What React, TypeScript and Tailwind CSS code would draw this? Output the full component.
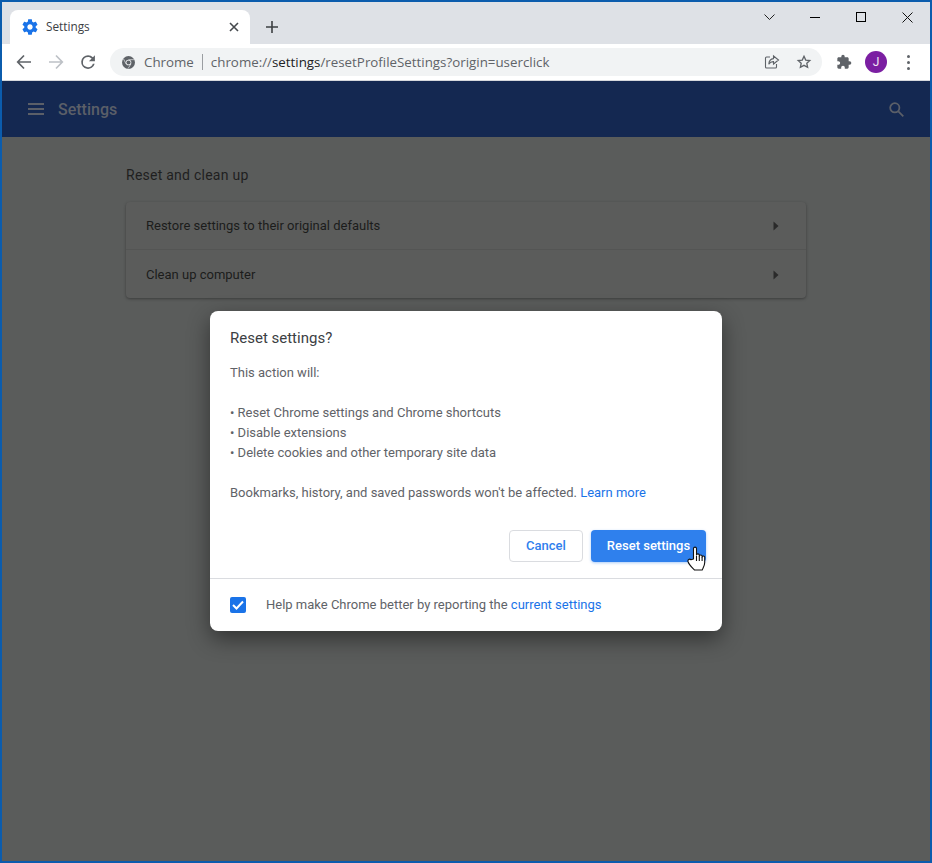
const GEAR = "M19.43 12.98c.04-.32.07-.64.07-.98s-.03-.66-.07-.98l2.11-1.65c.19-.15.24-.42.12-.64l-2-3.46c-.12-.22-.39-.3-.61-.22l-2.49 1c-.52-.4-1.08-.73-1.69-.98l-.38-2.65C14.46 2.18 14.25 2 14 2h-4c-.25 0-.46.18-.49.42l-.38 2.65c-.61.25-1.17.59-1.69.98l-2.49-1c-.23-.09-.49 0-.61.22l-2 3.46c-.13.22-.07.49.12.64l2.11 1.65c-.04.32-.07.65-.07.98s.03.66.07.98l-2.11 1.65c-.19.15-.24.42-.12.64l2 3.46c.12.22.39.3.61.22l2.49-1c.52.4 1.08.73 1.69.98l.38 2.65c.03.24.24.42.49.42h4c.25 0 .46-.18.49-.42l.38-2.65c.61-.25 1.17-.59 1.69-.98l2.49 1c.23.09.49 0 .61-.22l2-3.46c.12-.22.07-.49-.12-.64l-2.11-1.65zM12 15.5c-1.93 0-3.5-1.57-3.5-3.5s1.57-3.5 3.5-3.5 3.5 1.57 3.5 3.5-1.57 3.5-3.5 3.5z";

function Arrow({ color, flip }: { color: string; flip?: boolean }) {
  return (
    <svg width="16" height="16" viewBox="0 0 16 16" fill="none" stroke={color} strokeWidth="1.7" style={flip ? { transform: "scaleX(-1)" } : undefined}>
      <path d="M15 8H2M8 1.5 1.7 8 8 14.5" />
    </svg>
  );
}

function Row({ label, last }: { label: string; last?: boolean }) {
  return (
    <div className={`flex h-[48px] items-center justify-between pl-5 pr-[27px] ${last ? "pt-[1px]" : "border-b border-[#545554]"}`}>
      <span className="text-[13px] text-[#1c1c1c]">{label}</span>
      <svg width="6" height="10" viewBox="0 0 6 10" fill="#2a2a2a"><path d="M0.5 0.5 5.5 5 0.5 9.5z" /></svg>
    </div>
  );
}

export default function App() {
  return (
    <div className="relative flex h-[863px] w-[932px] flex-col overflow-hidden border-2 border-[#0b5cad] bg-[#5a5c5b] font-['Roboto',sans-serif]">
      {/* Tab strip */}
      <div className="flex h-[42px] shrink-0 items-end bg-[#dee1e6] pl-2">
        <div className="flex h-[34px] w-[240px] items-center rounded-t-[8px] bg-white pl-[12px] pr-[11px]">
          <svg width="16" height="16" viewBox="0 0 24 24" fill="#1a73e8" className="scale-[1.15]"><path d={GEAR} /></svg>
          <span className="ml-[8px] flex-1 font-['Open_Sans',sans-serif] text-[11.8px] text-[#3c4043]">Settings</span>
          <svg width="10" height="10" viewBox="0 0 10 10" stroke="#45494d" strokeWidth="1.6" fill="none"><path d="M1 1l8 8M9 1l-8 8" /></svg>
        </div>
        <div className="flex h-[34px] w-[44px] items-center justify-center">
          <svg width="12" height="12" viewBox="0 0 12 12" stroke="#3c4043" strokeWidth="1.6" fill="none"><path d="M6 0v12M0 6h12" /></svg>
        </div>
        <div className="ml-auto flex h-full w-[184px] items-start">
          <div className="flex h-[30px] w-[46px] items-center justify-center">
            <svg width="11" height="7" viewBox="0 0 11 7" stroke="#222" strokeWidth="1" fill="none"><path d="M.5.5l5 5 5-5" /></svg>
          </div>
          <div className="flex h-[30px] w-[46px] items-center justify-center">
            <div className="h-px w-[10px] bg-black" />
          </div>
          <div className="flex h-[30px] w-[46px] items-center justify-center">
            <div className="h-[10px] w-[10px] border border-black" />
          </div>
          <div className="flex h-[30px] w-[46px] items-center justify-center">
            <svg width="11" height="11" viewBox="0 0 11 11" stroke="#111" strokeWidth="1" fill="none"><path d="M.5.5l10 10M10.5.5l-10 10" /></svg>
          </div>
        </div>
      </div>

      {/* Toolbar */}
      <div className="flex h-[37px] shrink-0 items-center border-b border-[#d6d8dc] bg-white">
        <div className="flex w-[108px] items-center pl-[14px]">
          <Arrow color="#5f6368" />
          <div className="ml-[16px]"><Arrow color="#bdc1c6" flip /></div>
          <svg className="ml-[15px]" width="18" height="18" viewBox="0 0 24 24" fill="#5f6368"><path d="M17.65 6.35A7.96 7.96 0 0 0 12 4a8 8 0 1 0 7.73 10h-2.08A6 6 0 1 1 12 6c1.66 0 3.14.69 4.22 1.78L13 11h7V4l-2.35 2.35z" transform="translate(-1.6 -1.6) scale(1.14)" /></svg>
        </div>
        <div className="flex h-[28px] w-[712px] items-center rounded-full bg-[#f1f3f4] pl-[12px] pr-[9px] font-['Open_Sans',sans-serif] text-[13.33px]">
          <svg width="13" height="13" viewBox="0 0 24 24" className="mr-[9px] shrink-0">
            <circle cx="12" cy="12" r="12" fill="#5f6368" />
            <circle cx="12" cy="12" r="5.2" fill="#f1f3f4" />
            <circle cx="12" cy="12" r="3.8" fill="#5f6368" />
            <path d="M12 6.8h10M7.5 14.6 2.8 5.5M16.5 14.6 11 23.5" stroke="#f1f3f4" strokeWidth="1.2" />
          </svg>
          <span className="pt-[1px] text-[#5f6368]">Chrome</span>
          <span className="mx-[8px] h-[16px] w-px bg-[#9a9da1]" />
          <span className="flex-1 whitespace-nowrap pt-[1px] text-[#5f6368]">chrome://<span className="text-[#202124]">settings</span>/resetProfileSettings?origin=userclick</span>
          <svg width="16" height="16" viewBox="0 0 16 16" fill="none" stroke="#5f6368" strokeWidth="1.1" className="mr-[16px]">
            <path d="M6 3H2.5A1 1 0 0 0 1.500 4v9a1 1 0 0 0 1 1h9a1 1 0 0 0 1-1v-3" />
            <path d="M9.500 2v2.600C6.500 4.800 5 7 4.800 10.300 6 8.300 7.500 7.500 9.500 7.600V10l5-4z" />
          </svg>
          <svg width="16" height="16" viewBox="0 0 24 24" fill="none" stroke="#5f6368" strokeWidth="2" className="mr-[1px]">
            <path d="M12 3.500l2.600 5.600 6.100.7-4.500 4.200 1.200 6L12 17l-5.400 3 1.200-6-4.500-4.200 6.100-.7z" />
          </svg>
        </div>
        <svg className="ml-[14px]" width="16" height="16" viewBox="0 0 24 24" fill="#5f6368"><path d="M20.500 11H19V7c0-1.100-.9-2-2-2h-4V3.500a2.500 2.500 0 0 0-5 0V5H4c-1.100 0-1.990.9-1.990 2v3.800H3.500c1.490 0 2.700 1.210 2.700 2.700s-1.210 2.700-2.700 2.700H2V20c0 1.100.9 2 2 2h3.800v-1.500c0-1.490 1.210-2.700 2.700-2.700s2.700 1.210 2.700 2.700V22H17c1.100 0 2-.9 2-2v-4h1.500a2.500 2.500 0 0 0 0-5z" /></svg>
        <div className="ml-[13px] flex h-[22px] w-[22px] items-center justify-center rounded-full bg-[#7b1fa2] text-[12px] text-[#f3e5f5]">J</div>
        <div className="ml-[20px] flex flex-col gap-[3px]">
          <div className="h-[3px] w-[3px] rounded-full bg-[#5f6368]" />
          <div className="h-[3px] w-[3px] rounded-full bg-[#5f6368]" />
          <div className="h-[3px] w-[3px] rounded-full bg-[#5f6368]" />
        </div>
      </div>

      {/* Settings header */}
      <div className="flex h-[56px] shrink-0 items-center justify-between bg-[#142851] pl-[26px] pr-[26px]">
        <div className="flex items-center">
          <div className="flex w-[16px] flex-col gap-[3px]">
            <div className="h-[2px] bg-[#5b5f68]" />
            <div className="h-[2px] bg-[#5b5f68]" />
            <div className="h-[2px] bg-[#5b5f68]" />
          </div>
          <span className="ml-[14px] pt-[2px] text-[16px] font-medium text-[#5b5f68]">Settings</span>
        </div>
        <svg width="15" height="15" viewBox="0 0 15 15" fill="none" stroke="#5b5f68" strokeWidth="1.8"><circle cx="5.800" cy="5.800" r="4.600" /><path d="M9.300 9.300l5 5" /></svg>
      </div>

      {/* Page */}
      <div className="flex-1 pl-[124px] pt-[30px]">
        <h2 className="h-[16px] text-[14px] leading-[16px] tracking-[0.25px] text-[#1f1f1f]">Reset and clean up</h2>
        <div className="mt-[19px] w-[680px] rounded-[4px] bg-[#5b5c5b] shadow-[0_1px_3px_rgba(0,0,0,0.35)]">
          <Row label="Restore settings to their original defaults" />
          <Row label="Clean up computer" last />
        </div>
      </div>

      {/* Dialog */}
      <div className="absolute left-[208px] top-[309px] w-[512px] overflow-hidden rounded-[8px] bg-white shadow-[0_8px_22px_rgba(0,0,0,0.45)]">
        <div className="px-5 pb-0 pt-[17px]">
          <div className="text-[15px] leading-[20px] text-[#3c4043]">Reset settings?</div>
          <div className="mt-[15px] text-[13px] leading-[20px] text-[#5f6368]">
            <div>This action will:</div>
            <div className="h-[20px]" />
            <div>• Reset Chrome settings and Chrome shortcuts</div>
            <div>• Disable extensions</div>
            <div>• Delete cookies and other temporary site data</div>
            <div className="h-[20px]" />
            <div>Bookmarks, history, and saved passwords won't be affected. <span className="text-[#1a73e8]">Learn more</span></div>
          </div>
        </div>
        <div className="mt-[27px] flex justify-end gap-2 px-4">
          <button className="h-[32px] w-[74px] rounded-[4px] border border-[#dadce0] bg-white text-[13px] font-medium text-[#2f80ed]">Cancel</button>
          <button className="h-[32px] w-[115px] rounded-[4px] bg-[#2f80ed] text-[13px] font-medium text-white shadow-[0_1px_3px_rgba(47,128,237,0.4)]">Reset settings</button>
        </div>
        <div className="mt-[16px] flex h-[53px] items-center border-t border-[#dadce0] pl-5">
          <div className="flex h-[16px] w-[16px] items-center justify-center rounded-[2px] bg-[#1a73e8]">
            <svg width="12" height="10" viewBox="0 0 12 10" fill="none" stroke="white" strokeWidth="2"><path d="M1 5l3.500 3.500L11 1.500" /></svg>
          </div>
          <span className="ml-[20px] text-[13px] text-[#5f6368]">Help make Chrome better by reporting the <span className="text-[#1a73e8]">current settings</span></span>
        </div>
      </div>

      {/* Cursor */}
      <svg className="absolute left-[685px] top-[544px]" width="19" height="26" viewBox="0 0 19 26" fill="white" stroke="#111" strokeWidth="1.1" strokeLinejoin="round">
        <path d="M6.500 13V2.500C6.500.7 9.500.7 9.500 2.500V9c0-1.500 2.800-1.500 2.800 0v1c0-1.400 2.800-1.400 2.800 0v1c0-1.300 2.600-1.300 2.600 0v5.500c0 3-1.200 4.500-2.500 7.500H7.500C5.500 22 2 19 1 15.500c-.5-2 1.500-3 3-1.800z" />
        <path d="M9.500 10v5M12.300 10v5M15.100 11v4" fill="none" />
      </svg>
    </div>
  );
}
